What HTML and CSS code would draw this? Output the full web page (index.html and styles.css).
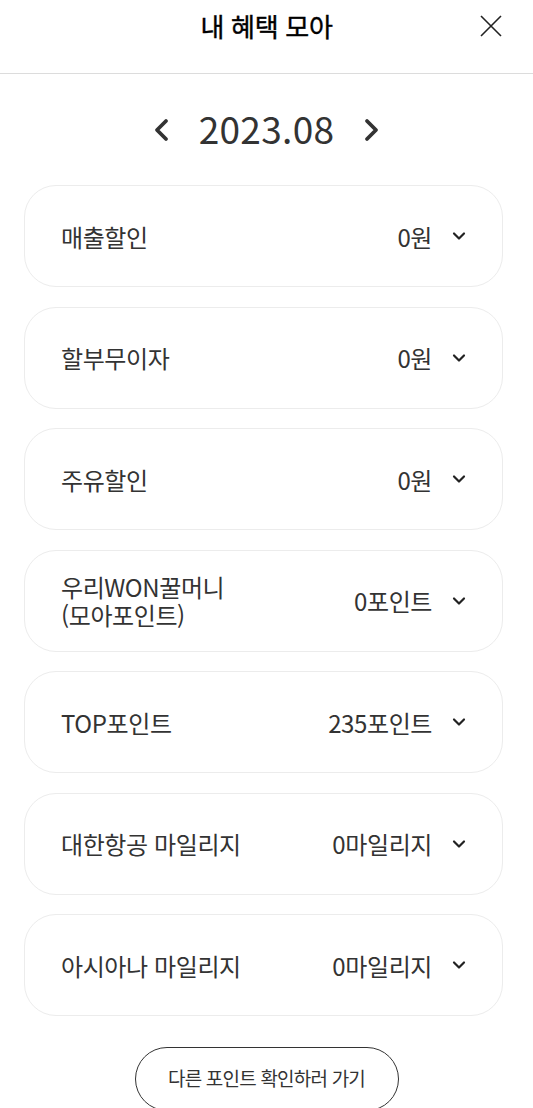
FILE: index.html
```html
<!DOCTYPE html>
<html lang="ko">
<head>
<meta charset="utf-8">
<title>내 혜택 모아</title>
<link rel="stylesheet" href="styles.css">
</head>
<body>
<header class="top">
  <h1 class="title">내 혜택 모아</h1>
  <button class="close" aria-label="닫기">
    <svg width="24" height="24" viewBox="0 0 24 24"><path d="M2 2L22 22M22 2L2 22" stroke="#222" stroke-width="1.6" fill="none"/></svg>
  </button>
</header>
<div class="month">
  <svg class="arrow" width="20" height="28" viewBox="0 0 20 28"><path d="M15 5L6 14L15 23" stroke="#333" stroke-width="3.8" fill="none" stroke-linecap="round" stroke-linejoin="round"/></svg>
  <span class="date">2023.08</span>
  <svg class="arrow" width="20" height="28" viewBox="0 0 20 28"><path d="M5 5L14 14L5 23" stroke="#333" stroke-width="3.8" fill="none" stroke-linecap="round" stroke-linejoin="round"/></svg>
</div>
<ul class="list">
  <li class="card"><span class="name">매출할인</span><span class="val">0원</span><svg class="chev" width="14" height="10" viewBox="0 0 14 10"><path d="M2 2.5L7 7.5L12 2.5" stroke="#222" stroke-width="2.2" fill="none" stroke-linecap="round" stroke-linejoin="round"/></svg></li>
  <li class="card"><span class="name">할부무이자</span><span class="val">0원</span><svg class="chev" width="14" height="10" viewBox="0 0 14 10"><path d="M2 2.5L7 7.5L12 2.5" stroke="#222" stroke-width="2.2" fill="none" stroke-linecap="round" stroke-linejoin="round"/></svg></li>
  <li class="card"><span class="name">주유할인</span><span class="val">0원</span><svg class="chev" width="14" height="10" viewBox="0 0 14 10"><path d="M2 2.5L7 7.5L12 2.5" stroke="#222" stroke-width="2.2" fill="none" stroke-linecap="round" stroke-linejoin="round"/></svg></li>
  <li class="card"><span class="name"><span class="line">우리WON꿀머니</span><span class="line">(모아포인트)</span></span><span class="val">0포인트</span><svg class="chev" width="14" height="10" viewBox="0 0 14 10"><path d="M2 2.5L7 7.5L12 2.5" stroke="#222" stroke-width="2.2" fill="none" stroke-linecap="round" stroke-linejoin="round"/></svg></li>
  <li class="card"><span class="name">TOP포인트</span><span class="val">235포인트</span><svg class="chev" width="14" height="10" viewBox="0 0 14 10"><path d="M2 2.5L7 7.5L12 2.5" stroke="#222" stroke-width="2.2" fill="none" stroke-linecap="round" stroke-linejoin="round"/></svg></li>
  <li class="card"><span class="name">대한항공 마일리지</span><span class="val">0마일리지</span><svg class="chev" width="14" height="10" viewBox="0 0 14 10"><path d="M2 2.5L7 7.5L12 2.5" stroke="#222" stroke-width="2.2" fill="none" stroke-linecap="round" stroke-linejoin="round"/></svg></li>
  <li class="card"><span class="name">아시아나 마일리지</span><span class="val">0마일리지</span><svg class="chev" width="14" height="10" viewBox="0 0 14 10"><path d="M2 2.5L7 7.5L12 2.5" stroke="#222" stroke-width="2.2" fill="none" stroke-linecap="round" stroke-linejoin="round"/></svg></li>
</ul>
<div class="more-wrap">
  <button class="more">다른 포인트 확인하러 가기</button>
</div>
</body>
</html>
```
FILE: styles.css
```css
* { box-sizing: border-box; }
html, body { margin: 0; padding: 0; background: #fff; }
body {
  font-family: "Noto Sans CJK KR", "Noto Sans", sans-serif;
  color: #333;
  overflow: hidden;
}
.top {
  position: relative;
  height: 74px;
  border-bottom: 1px solid #dcdcdc;
  display: flex;
  align-items: center;
  justify-content: center;
}
.title {
  margin: 0;
  font-size: 26px;
  font-weight: 400;
  color: #000;
  letter-spacing: -0.3px;
  line-height: 1;
  padding-bottom: 22px;
  -webkit-text-stroke: 0.4px #000;
}
.close {
  position: absolute;
  right: 30px;
  top: 14px;
  border: 0;
  background: none;
  padding: 0;
  width: 24px;
  height: 24px;
}
.close svg { display: block; }
.month {
  display: flex;
  align-items: center;
  justify-content: center;
  gap: 28px;
  padding: 36px 0 35px;
  height: 111px;
}
.arrow { display: block; }
.date {
  font-size: 37px;
  color: #333;
  line-height: 40px;
  font-weight: 400;
  letter-spacing: 0.3px;
  margin-top: -4px;
}
.list {
  list-style: none;
  margin: 0;
  padding: 0 30px 0 24px;
  display: flex;
  flex-direction: column;
  gap: 19.5px;
}
.card {
  height: 102px;
  border: 1.5px solid #ececec;
  border-radius: 32px;
  display: flex;
  align-items: center;
  padding: 0 36px 0 36px;
  font-size: 24px;
  color: #333;
  letter-spacing: -0.4px;
}
.name { flex: 1; line-height: 29px; display: flex; flex-direction: column; }
.line { display: block; line-height: 28px; }
.val { margin-right: 20px; }
.chev { display: block; }
.more-wrap {
  display: flex;
  justify-content: center;
  padding-top: 31px;
}
.more {
  width: 264px;
  height: 64px;
  border: 1.5px solid #333;
  border-radius: 32px;
  background: #fff;
  font-family: "Noto Sans CJK KR", sans-serif;
  font-size: 19px;
  color: #333;
  letter-spacing: -0.8px;
  margin-left: 0;
  padding-bottom: 4px;
}
```
